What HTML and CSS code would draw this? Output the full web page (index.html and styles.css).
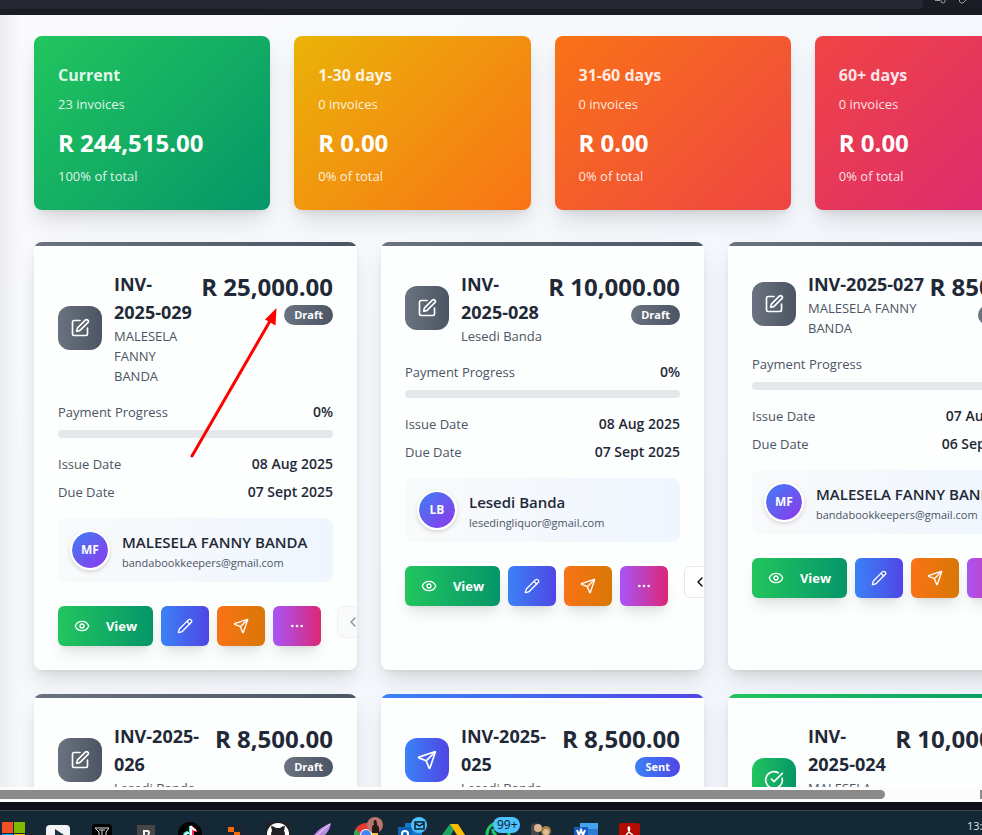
FILE: index.html
```html
<!DOCTYPE html>
<html lang="en">
<head>
<meta charset="utf-8">
<title>Invoices</title>
<link rel="stylesheet" href="styles.css">
</head>
<body>
<svg class="sprite" aria-hidden="true">
  <symbol id="edit" viewBox="0 0 24 24"><path d="M12 3H5a2 2 0 0 0-2 2v14a2 2 0 0 0 2 2h14a2 2 0 0 0 2-2v-7"/><path d="M18.375 2.625a1 1 0 0 1 3 3l-9.013 9.014a2 2 0 0 1-.853.505l-2.873.84a.5.5 0 0 1-.62-.62l.84-2.873a2 2 0 0 1 .506-.852z"/></symbol>
  <symbol id="send" viewBox="0 0 24 24"><path d="M14.536 21.686a.5.5 0 0 0 .937-.024l6.5-19a.496.496 0 0 0-.635-.635l-19 6.5a.5.5 0 0 0-.024.937l7.93 3.18a2 2 0 0 1 1.112 1.11z"/><path d="m21.854 2.147-10.94 10.939"/></symbol>
  <symbol id="check" viewBox="0 0 24 24"><path d="M21.801 10A10 10 0 1 1 17 3.335"/><path d="m9 11 3 3L22 4"/></symbol>
  <symbol id="eye" viewBox="0 0 24 24"><path d="M2.062 12.348a1 1 0 0 1 0-.696 10.75 10.75 0 0 1 19.876 0 1 1 0 0 1 0 .696 10.75 10.75 0 0 1-19.876 0"/><circle cx="12" cy="12" r="3"/></symbol>
  <symbol id="pen" viewBox="0 0 24 24"><path d="M21.174 6.812a1 1 0 0 0-3.986-3.987L3.842 16.174a2 2 0 0 0-.5.83l-1.321 4.352a.5.5 0 0 0 .623.622l4.353-1.32a2 2 0 0 0 .83-.497z"/><path d="m15 5 4 4"/></symbol>
  <symbol id="dots" viewBox="0 0 24 24"><circle cx="5" cy="12" r="1"/><circle cx="12" cy="12" r="1"/><circle cx="19" cy="12" r="1"/></symbol>
  <symbol id="left" viewBox="0 0 24 24"><path d="m15 18-6-6 6-6"/></symbol>
</svg>

<div class="screen">
  <header class="chrome">
    <div class="address"></div>
    <svg class="chrome-icons" width="48" height="9" viewBox="0 0 48 9" fill="none" stroke="#9a9ca3" stroke-width="1"><path d="M1 .5h5M7 0v1a2 2 0 0 0 4 0V0M25 1l5-5 3 3-4 4q-2 1-4-2"/></svg>
  </header>

  <main class="viewport">
    <div class="page">
      <section class="stats">
        <article class="stat green">
          <h2>Current</h2><p>23 invoices</p><strong>R 244,515.00</strong><p>100% of total</p>
        </article>
        <article class="stat yellow">
          <h2>1-30 days</h2><p>0 invoices</p><strong>R 0.00</strong><p>0% of total</p>
        </article>
        <article class="stat orange">
          <h2>31-60 days</h2><p>0 invoices</p><strong>R 0.00</strong><p>0% of total</p>
        </article>
        <article class="stat red">
          <h2>60+ days</h2><p>0 invoices</p><strong>R 0.00</strong><p>0% of total</p>
        </article>
      </section>

      <section class="invoices">
        <article class="card draft">
          <header class="head">
            <span class="tile"><svg class="icon"><use href="#edit"/></svg></span>
            <div class="who"><h3>INV-<br>2025-029</h3><p>MALESELA<br>FANNY<br>BANDA</p></div>
            <div class="sum"><strong>R 25,000.00</strong><span class="badge">Draft</span></div>
          </header>
          <div class="row"><span>Payment Progress</span><b>0%</b></div>
          <div class="bar" role="progressbar" aria-valuenow="0"></div>
          <dl class="dates">
            <div class="row"><dt>Issue Date</dt><dd>08 Aug 2025</dd></div>
            <div class="row"><dt>Due Date</dt><dd>07 Sept 2025</dd></div>
          </dl>
          <div class="client">
            <span class="avatar">MF</span>
            <div><h4>MALESELA FANNY BANDA</h4><p>bandabookkeepers@gmail.com</p></div>
          </div>
          <div class="actions">
            <button class="btn view"><svg class="icon"><use href="#eye"/></svg>View</button>
            <button class="btn blue"><svg class="icon"><use href="#pen"/></svg></button>
            <button class="btn amber"><svg class="icon"><use href="#send"/></svg></button>
            <button class="btn pink"><svg class="icon"><use href="#dots"/></svg></button>
            <button class="prev" disabled><svg class="icon"><use href="#left"/></svg></button>
          </div>
        </article>

        <article class="card draft">
          <header class="head">
            <span class="tile"><svg class="icon"><use href="#edit"/></svg></span>
            <div class="who"><h3>INV-<br>2025-028</h3><p>Lesedi Banda</p></div>
            <div class="sum"><strong>R 10,000.00</strong><span class="badge">Draft</span></div>
          </header>
          <div class="row"><span>Payment Progress</span><b>0%</b></div>
          <div class="bar" role="progressbar" aria-valuenow="0"></div>
          <dl class="dates">
            <div class="row"><dt>Issue Date</dt><dd>08 Aug 2025</dd></div>
            <div class="row"><dt>Due Date</dt><dd>07 Sept 2025</dd></div>
          </dl>
          <div class="client">
            <span class="avatar">LB</span>
            <div><h4>Lesedi Banda</h4><p>lesedingliquor@gmail.com</p></div>
          </div>
          <div class="actions">
            <button class="btn view"><svg class="icon"><use href="#eye"/></svg>View</button>
            <button class="btn blue"><svg class="icon"><use href="#pen"/></svg></button>
            <button class="btn amber"><svg class="icon"><use href="#send"/></svg></button>
            <button class="btn pink"><svg class="icon"><use href="#dots"/></svg></button>
            <button class="prev"><svg class="icon"><use href="#left"/></svg></button>
          </div>
        </article>

        <article class="card draft">
          <header class="head">
            <span class="tile"><svg class="icon"><use href="#edit"/></svg></span>
            <div class="who"><h3>INV-2025-027</h3><p>MALESELA FANNY<br>BANDA</p></div>
            <div class="sum"><strong>R 850.00</strong><span class="badge">Draft</span></div>
          </header>
          <div class="row"><span>Payment Progress</span><b>0%</b></div>
          <div class="bar" role="progressbar" aria-valuenow="0"></div>
          <dl class="dates">
            <div class="row"><dt>Issue Date</dt><dd>07 Aug 2025</dd></div>
            <div class="row"><dt>Due Date</dt><dd>06 Sept 2025</dd></div>
          </dl>
          <div class="client">
            <span class="avatar">MF</span>
            <div><h4>MALESELA FANNY BANDA</h4><p>bandabookkeepers@gmail.com</p></div>
          </div>
          <div class="actions">
            <button class="btn view"><svg class="icon"><use href="#eye"/></svg>View</button>
            <button class="btn blue"><svg class="icon"><use href="#pen"/></svg></button>
            <button class="btn amber"><svg class="icon"><use href="#send"/></svg></button>
            <button class="btn pink"><svg class="icon"><use href="#dots"/></svg></button>
          </div>
        </article>

        <article class="card draft">
          <header class="head">
            <span class="tile"><svg class="icon"><use href="#edit"/></svg></span>
            <div class="who"><h3>INV-2025-<br>026</h3><p>Lesedi Banda</p></div>
            <div class="sum"><strong>R 8,500.00</strong><span class="badge">Draft</span></div>
          </header>
        </article>

        <article class="card sent">
          <header class="head">
            <span class="tile"><svg class="icon"><use href="#send"/></svg></span>
            <div class="who"><h3>INV-2025-<br>025</h3><p>Lesedi Banda</p></div>
            <div class="sum"><strong>R 8,500.00</strong><span class="badge">Sent</span></div>
          </header>
        </article>

        <article class="card paid">
          <header class="head">
            <span class="tile"><svg class="icon"><use href="#check"/></svg></span>
            <div class="who"><h3>INV-<br>2025-024</h3><p>MALESELA<br>FANNY<br>BANDA</p></div>
            <div class="sum"><strong>R 10,000.00</strong></div>
          </header>
        </article>
      </section>
    </div>
    <svg class="arrow" width="100" height="160" viewBox="185 302 100 160"><path d="M192 456 270 321" stroke="#f00" stroke-width="3" stroke-linecap="round"/><path d="M276.500 308 265 319.500l10.500 6z" fill="#f00"/></svg>
  </main>

  <div class="scrollbar"><div class="thumb"></div><div class="thumb-end"></div></div>

  <footer class="taskbar">
    <div class="apps">
      <svg viewBox="0 0 44 25"><path fill="#f25022" d="M10 12h11v11H10z"/><path fill="#7fba00" d="M22 12h11v11H22z"/><path fill="#00a4ef" d="M10 24h11v1H10z"/><path fill="#ffb900" d="M22 24h11v1H22z"/></svg>
      <svg viewBox="0 0 44 25"><rect x="10" y="15" width="24" height="18" rx="4" fill="#f1f3f5"/><path fill="#1d3340" d="m19 19 9 6h-9z"/></svg>
      <svg viewBox="0 0 44 25"><rect x="12" y="14" width="20" height="20" rx="4" fill="#000"/><path fill="none" stroke="#ddd" d="M15 18h14l-3 4v3M15 18l4 4v3M19 20h6M22 20v5"/></svg>
      <svg viewBox="0 0 44 25"><path fill="#474747" d="M13 15h18v10H13z"/><path fill="none" stroke="#eee" stroke-width="2" d="M20 25v-4h4q2 1 0 4"/></svg>
      <svg viewBox="0 0 44 25"><circle cx="22" cy="24" r="12" fill="#000"/><g fill="none" stroke-width="2"><path stroke="#25f4ee" d="M22 25v-9M20 22q-3 0-4 3"/><path stroke="#fe2c55" d="M25 25v-8q1 4 4 4"/><path stroke="#fff" d="M23 25v-9q2 4 5 4M21 23q-3 0-4 2"/></g></svg>
      <svg viewBox="0 0 44 25"><path fill="#1d2431" d="M15 15h19v10H15z"/><path fill="#f26a0a" d="M16 17h6v5h-6zM22 22h6v3h-6z"/></svg>
      <svg viewBox="0 0 44 25"><path fill="#201f24" d="M10 12h24v13H10z"/><circle cx="22" cy="24" r="11" fill="#fff"/><path fill="#201f24" d="M15 25q0-3 1-4l-1-5q3 0 5 2h4q2-2 5-2l-1 5q1 1 1 4z"/></svg>
      <svg viewBox="0 0 44 25"><path fill="#b98ae0" d="M14 25q6-8 17-12-1 7-6 12z"/><path fill="none" stroke="#efe1fb" d="m17 25 13-11"/></svg>
      <svg viewBox="0 0 44 25"><circle cx="22" cy="25" r="12" fill="#e53935"/><path fill="#30a853" d="M10 25q0-4 2-6l5 6z"/><path fill="#fbc02d" d="M27 22h7v3h-7z"/><circle cx="22" cy="25" r="6" fill="#fff"/><circle cx="22" cy="25" r="5" fill="#4285f4"/><circle cx="31" cy="15" r="8" fill="#b9776c"/><path fill="#26191e" d="M28 23v-5q0-3 2-3-1-5 1-5t2 5q3 1 2 8z"/></svg>
      <svg viewBox="0 0 44 25"><path fill="#1479c8" d="M17 13h17v12H17z"/><rect x="10" y="17" width="14" height="9" fill="#0b64b8"/><circle cx="17" cy="24" r="3" fill="none" stroke="#fff" stroke-width="2"/><circle cx="31" cy="15" r="8" fill="#4cc2ff"/><path fill="none" stroke="#10202c" stroke-width="1.500" d="M27 12h9v7h-9zM27 13l4.500 3 4.500-3"/></svg>
      <svg viewBox="0 0 44 25"><path fill="#1fa463" d="m10 25 8-11 4 5-3 6z"/><path fill="#167b48" d="M18 14h7l-3 5z"/><path fill="#fbbc04" d="M18 14h8l7 11h-8z"/></svg>
      <svg viewBox="0 0 44 25"><circle cx="22" cy="24" r="11" fill="none" stroke="#22c768" stroke-width="3"/><path fill="none" stroke="#22c768" stroke-width="3" d="M17 19v3l3 3"/><rect x="17" y="7" width="27" height="16" rx="8" fill="#4cc2ff"/><text x="21" y="19" class="count">99+</text></svg>
      <svg viewBox="0 0 44 25"><path fill="#47484a" d="M11 25V15q4-3 8-1v11z"/><circle cx="18" cy="18" r="4" fill="#dcb48e"/><circle cx="26" cy="21" r="5" fill="#a88345"/><circle cx="26" cy="22" r="3" fill="#e5bd95"/></svg>
      <svg viewBox="0 0 44 25"><path fill="#2b7cd3" d="M16 13h18v12H16z"/><path fill="#41a5ee" d="M16 13h18v6H16z"/><path fill="#185abd" d="M10 17h14v8H10z"/><path fill="none" stroke="#fff" stroke-width="2" d="m13 20 2 5 2-5 2 5 2-5"/></svg>
      <svg viewBox="0 0 44 25"><rect x="11" y="13" width="21" height="20" rx="3" fill="#b30b00"/><path fill="none" stroke="#fff" stroke-width="1.500" d="M18 25q5-4 3-8-2 1 1 6l3 2"/></svg>
    </div>
    <time class="clock">13:</time>
  </footer>
</div>
</body>
</html>
```

FILE: styles.css
```css
* { box-sizing: border-box; }
body, h2, h3, h4, p, dl, dd { margin: 0; }
body {
  font-family: "Open Sans", "Noto Sans", sans-serif;
  font-size: 13px;
  line-height: 20px;
  color: #1f2937;
  overflow: hidden;
}
.sprite { display: none; }
.icon {
  width: 16px;
  height: 16px;
  flex: none;
  fill: none;
  stroke: currentColor;
  stroke-width: 2;
  stroke-linecap: round;
  stroke-linejoin: round;
}
.screen { height: 100vh; display: flex; flex-direction: column; background: #0e0f18; }

/* Browser frame */
.chrome { height: 15px; flex: none; display: flex; align-items: flex-start; background: #191c25; }
.address { flex: 1; height: 9px; margin-right: 11px; background: #242730; border-bottom-right-radius: 4px; }
.chrome-icons { flex: none; }

.viewport {
  flex: 1;
  min-height: 0;
  position: relative;
  overflow: hidden;
  background: linear-gradient(90deg, #ecedef, transparent 20px), linear-gradient(135deg, #fafafc, #f5f8fc 50%, #f1f4f9);
}
.page { width: 104%; min-width: 1051px; padding: 21px 0 0 34px; }

/* Summary tiles */
.stats { display: grid; grid-template-columns: repeat(4, 1fr); gap: 24px; }
.stat {
  padding: 24px;
  border-radius: 8px;
  color: rgba(255, 255, 255, .88);
  box-shadow: 0 14px 24px -4px rgba(0, 0, 0, .13), 0 4px 8px -4px rgba(0, 0, 0, .12);
}
.stat h2 { font-size: 16px; line-height: 30px; font-weight: 700; margin-bottom: 4px; }
.stat strong { display: block; font-size: 24px; line-height: 32px; margin: 13px 0 7px; color: #fff; }
.green { background: linear-gradient(135deg, #22c55e, #059669); }
.yellow { background: linear-gradient(135deg, #eab308, #f97316); }
.orange { background: linear-gradient(135deg, #f97316, #ef4444); }
.red { background: linear-gradient(135deg, #ef4444, #db2777); }

/* Invoice cards */
.invoices { display: grid; grid-template-columns: repeat(3, minmax(0, 1fr)); gap: 24px; margin-top: 32px; }
.card {
  --tone: linear-gradient(90deg, #6b7280, #4b5563);
  overflow: hidden;
  padding: 0 24px 24px;
  border-radius: 8px;
  background: #fdfefe;
  box-shadow: 0 12px 22px -3px rgba(0, 0, 0, .12), 0 4px 8px -4px rgba(0, 0, 0, .12);
}
.card::before { content: ""; display: block; height: 4px; margin: 0 -24px 24px; background: var(--tone); }
.sent { --tone: linear-gradient(90deg, #3b82f6, #4f46e5); }
.paid { --tone: linear-gradient(90deg, #22c55e, #059669); }
.head { display: flex; align-items: center; margin-bottom: 16px; }
.tile {
  width: 44px;
  height: 44px;
  flex: none;
  display: grid;
  place-items: center;
  margin-right: 12px;
  border-radius: 12px;
  background: var(--tone);
  color: #fff;
}
.tile .icon { width: 20px; height: 20px; }
.who { flex: 1; min-width: 0; white-space: nowrap; color: #4b5563; }
.who h3 { font-size: 18px; line-height: 28px; font-weight: 700; color: #1f2937; }
.sum { align-self: flex-start; display: flex; flex-direction: column; align-items: flex-end; gap: 1px; }
.sum strong { font-size: 24px; line-height: 34px; white-space: nowrap; }
.badge {
  padding: 0 10px;
  border-radius: 10px;
  background: var(--tone);
  color: #fff;
  font-size: 11px;
  font-weight: 700;
}
.row { display: flex; justify-content: space-between; color: #4b5563; }
.row b, .row dd { font-size: 14px; font-weight: 600; color: #1f2937; }
.bar { height: 8px; margin: 8px 0 16px; border-radius: 4px; background: #e5e7eb; }
.dates { display: grid; gap: 8px; }
.client {
  display: flex;
  gap: 12px;
  margin: 16px 0 24px;
  padding: 12px;
  border-radius: 8px;
  background: linear-gradient(90deg, #f9fafb, #eff6ff);
  white-space: nowrap;
}
.avatar {
  width: 40px;
  height: 40px;
  flex: none;
  display: grid;
  place-items: center;
  border: 2px solid #fff;
  border-radius: 50%;
  background: linear-gradient(135deg, #3b82f6, #9333ea) border-box;
  background-clip: padding-box;
  box-shadow: 0 2px 4px rgba(0, 0, 0, .15);
  color: #fff;
  font-size: 12px;
  font-weight: 700;
}
.client h4 { font-size: 15px; line-height: 24px; font-weight: 600; }
.client p { font-size: 11px; line-height: 18px; color: #4b5563; margin-bottom: -2px; }

.actions { display: flex; gap: 8px; }
button { font: inherit; }
.btn {
  width: 48px;
  height: 40px;
  flex: none;
  display: flex;
  align-items: center;
  justify-content: center;
  gap: 16px;
  padding: 0;
  border: 0;
  border-radius: 6px;
  color: #fff;
  font-weight: 700;
  box-shadow: 0 10px 15px -3px rgba(0, 0, 0, .1), 0 4px 6px -4px rgba(0, 0, 0, .1);
}
.view { width: 95px; background: linear-gradient(90deg, #22c55e, #059669); }
.blue { background: linear-gradient(90deg, #3b82f6, #4f46e5); }
.amber { background: linear-gradient(90deg, #f97316, #d97706); }
.pink { background: linear-gradient(90deg, #a855f7, #db2777); }
.prev {
  width: 32px;
  height: 32px;
  flex: none;
  display: grid;
  place-items: center;
  margin-left: 8px;
  padding: 0;
  border: 1px solid #e5e7eb;
  border-radius: 6px;
  background: #fff;
  color: #000;
}
.prev:disabled { background: #f9fafb; border-color: #f0f1f3; color: #8a8d93; }

.arrow { position: absolute; left: 185px; top: 287px; fill: none; }

/* Horizontal scrollbar */
.scrollbar {
  height: 15px;
  flex: none;
  display: flex;
  justify-content: space-between;
  align-items: center;
  margin-bottom: 8px;
  background: #fcfcfc;
}
.thumb { width: 90.1%; height: 9px; border-radius: 0 5px 5px 0; background: #8a8a8a; }
.thumb-end { width: 2px; height: 9px; background: #8a8a8a; }

/* System taskbar */
.taskbar {
  height: 25px;
  flex: none;
  display: flex;
  justify-content: space-between;
  overflow: hidden;
  background: #142836;
  box-shadow: inset 0 1px #394650;
}
.apps { display: flex; margin-left: -8px; }
.apps svg { width: 44px; height: 25px; flex: none; }
.count { font-size: 12px; fill: #0b1a24; }
.clock { width: 15px; padding-top: 6px; font-size: 11px; color: #dfe3e6; white-space: nowrap; }
```
